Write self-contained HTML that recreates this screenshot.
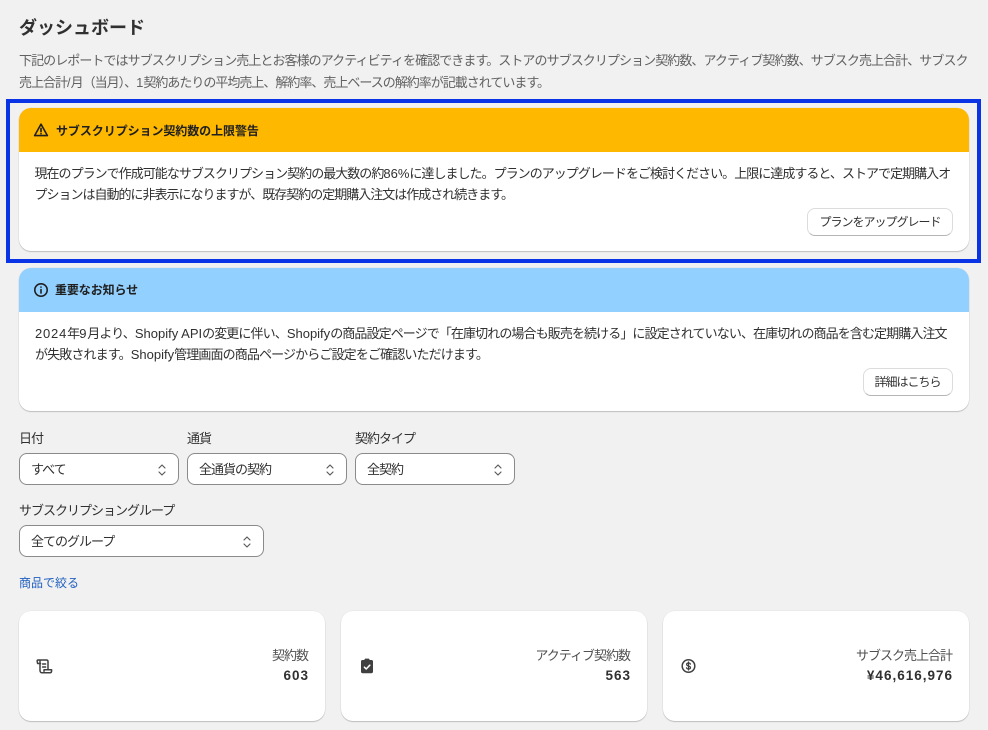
<!DOCTYPE html>
<html lang="ja"><head><meta charset="utf-8"><title>ダッシュボード</title>
<style>
html,body{margin:0;padding:0;background:#f1f1f1}
body{width:988px;height:730px;position:relative;overflow:hidden;font-family:"Liberation Sans","Noto Sans CJK JP",sans-serif;color:#303030;font-size:13px}
.t{position:absolute;white-space:nowrap;line-height:20px}
.box{position:absolute;box-sizing:border-box}
.card{background:#fff;border-radius:12px;box-shadow:0 1px 1px rgba(0,0,0,.2),0 0 0 .5px rgba(0,0,0,.05)}
.head{position:absolute;left:0;top:0;right:0;height:44px;border-radius:12px 12px 0 0}
.btn{background:#fff;border-radius:8px;border:1px solid #dcdcdc;border-bottom-color:#b5b5b5;font-size:12px;text-align:center;line-height:26px;color:#303030;letter-spacing:-1px}
.sel{background:#fff;border:1px solid #8a8a8a;border-radius:8px}
.sel span{position:absolute;left:11px;top:6px;line-height:20px;font-size:13px;white-space:nowrap;letter-spacing:-1px}
.sel svg{position:absolute;top:8px;right:10px}
.l{letter-spacing:0}
.d{letter-spacing:.8px}
.lab{letter-spacing:-1px}
.n{font-size:13.5px;font-weight:700;letter-spacing:1px;right:16px}
</style></head><body>
<div class="t" style="left:19px;top:16px;font-size:18px;font-weight:700;line-height:24px">ダッシュボード</div>
<div class="t" style="left:19px;top:51px;color:#616161;letter-spacing:-.93px">下記のレポートではサブスクリプション売上とお客様のアクティビティを確認できます。ストアのサブスクリプション契約数、アクティブ契約数、サブスク売上合計、サブスク</div>
<div class="t" style="left:19px;top:73px;color:#616161;letter-spacing:-1px">売上合計<span class="l">/</span>月（当月）、<span class="l">1</span>契約あたりの平均売上、解約率、売上ベースの解約率が記載されています。</div>

<div class="box" style="left:6px;top:99px;width:975px;height:164px;border:4px solid #0a33e6"></div>

<div class="box card" style="left:19px;top:108px;width:950px;height:143px">
<div class="head" style="background:#ffb800"></div>
<svg style="position:absolute;left:14px;top:14px" width="16" height="16" viewBox="0 0 16 16" fill="none" stroke="#202020" stroke-width="1.6" stroke-linejoin="round" stroke-linecap="round"><path d="M8 2.2 14.4 13.6H1.6Z"/><path d="M8 6.4V9.6"/><path d="M8 11.6V11.7"/></svg>
<div class="t" style="left:37px;top:13px;font-size:12px;font-weight:700;color:#202020;letter-spacing:-.07px">サブスクリプション契約数の上限警告</div>
<div class="t" style="left:15.5px;top:56px;letter-spacing:-.97px">現在のプランで作成可能なサブスクリプション契約の最大数の約<span class="l">86%</span>に達しました。プランのアップグレードをご検討ください。上限に達成すると、ストアで定期購入オ</div>
<div class="t" style="left:15.5px;top:77px;letter-spacing:-1px">プションは自動的に非表示になりますが、既存契約の定期購入注文は作成され続きます。</div>
<div class="box btn" style="left:788px;top:100px;width:146px;height:28px">プランをアップグレード</div>
</div>

<div class="box card" style="left:19px;top:268px;width:950px;height:143px">
<div class="head" style="background:#91d0ff"></div>
<svg style="position:absolute;left:14px;top:14px" width="16" height="16" viewBox="0 0 16 16" fill="none" stroke="#202020" stroke-width="1.6" stroke-linecap="round"><circle cx="8" cy="8" r="6.2"/><path d="M8 7.6V11"/><path d="M8 5V5.1"/></svg>
<div class="t" style="left:36px;top:12px;font-size:12px;font-weight:700;color:#202020;letter-spacing:-.1px">重要なお知らせ</div>
<div class="t" style="left:16px;top:56px;letter-spacing:-.9px"><span class="d">2024</span>年<span class="d">9</span>月より、<span class="l">Shopify API</span>の変更に伴い、<span class="l">Shopify</span>の商品設定ページで「在庫切れの場合も販売を続ける」に設定されていない、在庫切れの商品を含む定期購入注文</div>
<div class="t" style="left:16px;top:77px;letter-spacing:-.87px">が失敗されます。<span class="l">Shopify</span>管理画面の商品ページからご設定をご確認いただけます。</div>
<div class="box btn" style="left:844px;top:100px;width:89px;height:28px;width:90px;text-indent:-1px">詳細はこちら</div>
</div>

<div class="t lab" style="left:19px;top:429px">日付</div>
<div class="t lab" style="left:187px;top:429px">通貨</div>
<div class="t lab" style="left:355px;top:429px">契約タイプ</div>
<div class="box sel" style="left:19px;top:453px;width:160px;height:32px"><span>すべて</span><svg width="12" height="16" viewBox="0 0 12 16" fill="none" stroke="#5c5c5c" stroke-width="1.2" stroke-linecap="round" stroke-linejoin="round"><path d="M3 6 6 3 9 6M3 10 6 13 9 10"/></svg></div>
<div class="box sel" style="left:187px;top:453px;width:160px;height:32px"><span>全通貨の契約</span><svg width="12" height="16" viewBox="0 0 12 16" fill="none" stroke="#5c5c5c" stroke-width="1.2" stroke-linecap="round" stroke-linejoin="round"><path d="M3 6 6 3 9 6M3 10 6 13 9 10"/></svg></div>
<div class="box sel" style="left:355px;top:453px;width:160px;height:32px"><span>全契約</span><svg width="12" height="16" viewBox="0 0 12 16" fill="none" stroke="#5c5c5c" stroke-width="1.2" stroke-linecap="round" stroke-linejoin="round"><path d="M3 6 6 3 9 6M3 10 6 13 9 10"/></svg></div>
<div class="t lab" style="left:19px;top:501px">サブスクリプショングループ</div>
<div class="box sel" style="left:19px;top:525px;width:245px;height:32px"><span>全てのグループ</span><svg width="12" height="16" viewBox="0 0 12 16" fill="none" stroke="#5c5c5c" stroke-width="1.2" stroke-linecap="round" stroke-linejoin="round"><path d="M3 6 6 3 9 6M3 10 6 13 9 10"/></svg></div>
<div class="t" style="left:19px;top:573px;color:#1f5fbf;font-size:12px">商品で絞る</div>

<div class="box card" style="left:19px;top:611px;width:306px;height:110px">
<svg style="position:absolute;left:17px;top:47px" width="17" height="17" viewBox="0 0 17 17" fill="none" stroke="#404040" stroke-width="1.5" stroke-linejoin="round" stroke-linecap="round"><path d="M2 2H10.5C11.5 2 12 2.6 12 3.5V11.5"/><path d="M2 2C1.3 2 1 2.6 1.2 3.4L1.6 5.5H4.5"/><path d="M4 2.2V12.5C4 13.8 4.8 14.8 6 14.8H14C15 14.8 15.6 14 15.6 13V11.8H8V13.2"/><path d="M6.6 6H9.6M6.6 9H9.6"/></svg>
<div class="t lab" style="right:17px;top:35px;color:#505050">契約数</div>
<div class="t n" style="top:55px">603</div>
</div>
<div class="box card" style="left:341px;top:611px;width:306px;height:110px">
<svg style="position:absolute;left:18px;top:47px" width="16" height="16" viewBox="0 0 16 16"><path fill="#404040" d="M5.5 1.5C5.5 .9 6 .6 6.5.6H9.5C10 .6 10.5 .9 10.5 1.5V2H12.5C13.4 2 14 2.6 14 3.5V13.8C14 14.7 13.4 15.2 12.5 15.2H3.5C2.6 15.2 2 14.7 2 13.8V3.5C2 2.6 2.6 2 3.5 2H5.5Z"/><path fill="none" stroke="#fff" stroke-width="1.5" stroke-linecap="round" stroke-linejoin="round" d="M5.4 9.2 7.2 11 10.8 7.2"/></svg>
<div class="t lab" style="right:17px;top:35px;color:#505050">アクティブ契約数</div>
<div class="t n" style="top:55px">563</div>
</div>
<div class="box card" style="left:663px;top:611px;width:306px;height:110px">
<svg style="position:absolute;left:17px;top:47px" width="17" height="17" viewBox="0 0 17 17" fill="none" stroke="#404040" stroke-linecap="round"><circle cx="8.5" cy="8" r="6.3" stroke-width="1.5"/><path stroke-width="1.2" d="M10.4 6.2C10.2 5.4 9.4 5 8.5 5 7.4 5 6.6 5.6 6.6 6.5 6.6 8.5 10.5 7.5 10.5 9.6 10.5 10.5 9.6 11 8.5 11 7.5 11 6.8 10.6 6.5 9.8M8.5 4V12"/></svg>
<div class="t lab" style="right:17px;top:35px;color:#505050">サブスク売上合計</div>
<div class="t n" style="top:55px">¥46,616,976</div>
</div>
</body></html>
